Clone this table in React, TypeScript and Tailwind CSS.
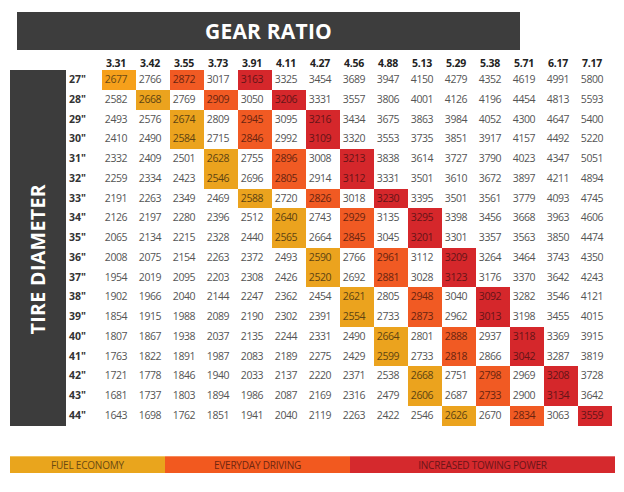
import React from "react";

const ratios = ["3.31","3.42","3.55","3.73","3.91","4.11","4.27","4.56","4.88","5.13","5.29","5.38","5.71","6.17","7.17"];

const rows: [string, number[]][] = [
  ["27", [2677,2766,2872,3017,3163,3325,3454,3689,3947,4150,4279,4352,4619,4991,5800]],
  ["28", [2582,2668,2769,2909,3050,3206,3331,3557,3806,4001,4126,4196,4454,4813,5593]],
  ["29", [2493,2576,2674,2809,2945,3095,3216,3434,3675,3863,3984,4052,4300,4647,5400]],
  ["30", [2410,2490,2584,2715,2846,2992,3109,3320,3553,3735,3851,3917,4157,4492,5220]],
  ["31", [2332,2409,2501,2628,2755,2896,3008,3213,3838,3614,3727,3790,4023,4347,5051]],
  ["32", [2259,2334,2423,2546,2696,2805,2914,3112,3331,3501,3610,3672,3897,4211,4894]],
  ["33", [2191,2263,2349,2469,2588,2720,2826,3018,3230,3395,3501,3561,3779,4093,4745]],
  ["34", [2126,2197,2280,2396,2512,2640,2743,2929,3135,3295,3398,3456,3668,3963,4606]],
  ["35", [2065,2134,2215,2328,2440,2565,2664,2845,3045,3201,3301,3357,3563,3850,4474]],
  ["36", [2008,2075,2154,2263,2372,2493,2590,2766,2961,3112,3209,3264,3464,3743,4350]],
  ["37", [1954,2019,2095,2203,2308,2426,2520,2692,2881,3028,3123,3176,3370,3642,4243]],
  ["38", [1902,1966,2040,2144,2247,2362,2454,2621,2805,2948,3040,3092,3282,3546,4121]],
  ["39", [1854,1915,1988,2089,2190,2302,2391,2554,2733,2873,2962,3013,3198,3455,4015]],
  ["40", [1807,1867,1938,2037,2135,2244,2331,2490,2664,2801,2888,2937,3118,3369,3915]],
  ["41", [1763,1822,1891,1987,2083,2189,2275,2429,2599,2733,2818,2866,3042,3287,3819]],
  ["42", [1721,1778,1846,1940,2033,2137,2220,2371,2538,2668,2751,2798,2969,3208,3728]],
  ["43", [1681,1737,1803,1894,1986,2087,2169,2316,2479,2606,2687,2733,2900,3134,3642]],
  ["44", [1643,1698,1762,1851,1941,2040,2119,2263,2422,2546,2626,2670,2834,3063,3559]],
];

// yellow column index per row
const yCol = [0,1,2,2,3,3,4,5,5,6,6,7,7,8,8,9,9,10];

function cellClass(r: number, c: number): string {
  const y = yCol[r];
  if (c === y) return r === 0 ? "bg-[#f6a01b] text-[#6b4a14]" : "bg-[#eba31e] text-[#5e4312]";
  if (c === y + 2) return "bg-[#f15a23] text-[#6a2410]";
  if (c === y + 4) return "bg-[#d5272b] text-[#661417]";
  return "text-[#555555]";
}

export default function App() {
  return (
    <div className="w-[624px] h-[492px] bg-white overflow-hidden" style={{ fontFamily: '"Open Sans", "Noto Sans", sans-serif' }}>
      <div className="pt-[12px] pl-[17px]">
        <div className="w-[503px] h-[38px] bg-[#3d3d3d] flex items-center justify-center">
          <span className="text-white font-bold text-[21px] leading-none tracking-[0.2px]">GEAR RATIO</span>
        </div>
      </div>
      <div className="h-[20px] flex items-end pl-[102px]">
        <div className="grid grid-cols-[repeat(15,34px)]">
          {ratios.map((r) => (
            <div key={r} className="text-center pr-[6px] text-[10.5px] leading-[13px] font-bold text-[#222] tracking-[-0.2px]">{r}</div>
          ))}
        </div>
      </div>
      <div className="flex pl-[10px]">
        <div className="w-[56px] h-[356px] bg-[#3c3c3c] flex items-center justify-center pt-[22px]">
          <span className="[writing-mode:vertical-rl] rotate-180 text-white font-bold text-[19.5px] leading-none tracking-[0.4px]">TIRE DIAMETER</span>
        </div>
        <div className="grid grid-cols-[36px_repeat(15,34px)] grid-rows-[repeat(18,19.78px)]">
          {rows.map(([label, vals], r) => (
            <React.Fragment key={label}>
              <div className="pl-[3px] flex items-center text-[10.5px] font-bold text-[#333]">{label}"</div>
              {vals.map((v, c) => (
                <div key={c} className={`flex items-center justify-center pr-[6px] text-[10.5px] tracking-[-0.4px] ${cellClass(r, c)}`}>{v}</div>
              ))}
            </React.Fragment>
          ))}
        </div>
      </div>
      <div className="mt-[30px] ml-[10px] w-[605px] h-[17px] flex text-[10px] uppercase tracking-[-0.2px]">
        <div className="w-[155px] bg-[#e9a51d] border-t border-[#f3c25a] flex items-center justify-center text-[#6a4a12]">FUEL ECONOMY</div>
        <div className="w-[185px] bg-[#f2591f] border-t border-[#f78a5a] flex items-center justify-center text-[#6e2610]">EVERYDAY DRIVING</div>
        <div className="flex-1 bg-[#d5292d] border-t border-[#e36a6a] flex items-center justify-center text-[#6a1518]">INCREASED TOWING POWER</div>
      </div>
    </div>
  );
}
